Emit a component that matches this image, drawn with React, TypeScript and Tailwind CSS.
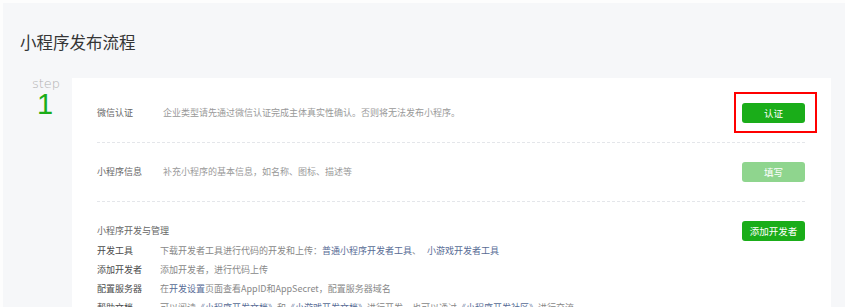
import React from 'react';

const font = { fontFamily: '"Noto Sans CJK SC", "Liberation Sans", sans-serif' };

function Btn({ children, light }: { children: React.ReactNode; light?: boolean }) {
    return (
        <div className={`w-[63px] h-[20px] rounded-[3px] flex items-center justify-center text-[9.5px] text-white ${light ? 'bg-[#8fd58e]' : 'bg-[#1aad19]'}`}>
            {children}
        </div>
    );
}

const subRows: { label: string; desc: React.ReactNode }[] = [
    {
        label: '开发工具',
        desc: (
            <>
                下载开发者工具进行代码的开发和上传：
                <span className="text-[#576b95]">普通小程序开发者工具</span>、
                <span className="text-[#576b95] ml-[6px]">小游戏开发者工具</span>
            </>
        ),
    },
    { label: '添加开发者', desc: '添加开发者，进行代码上传' },
    {
        label: '配置服务器',
        desc: (
            <>
                在<span className="text-[#576b95]">开发设置</span>页面查看AppID和AppSecret，配置服务器域名
            </>
        ),
    },
    {
        label: '帮助文档',
        desc: (
            <>
                可以阅读<span className="text-[#576b95]">《小程序开发文档》</span>和<span className="text-[#576b95]">《小游戏开发文档》</span>进行开发，也可以通过<span className="text-[#576b95]">《小程序开发社区》</span>进行交流
            </>
        ),
    },
];

export default function App() {
    return (
        <div className="w-[845px] h-[307px] overflow-hidden bg-[#fdfdfd] pt-[3px] pl-[3px]" style={font}>
            <div className="h-full bg-[#f6f7f9] pl-[17px] pr-[14px]">
                <h1 className="pt-[27px] text-[16.5px] leading-[24px] text-[#353535] font-normal">小程序发布流程</h1>

                <div className="flex mt-[24px]">
                    {/* step column */}
                    <div className="w-[52px] flex flex-col items-center">
                        <span className="text-[13px] leading-[12px] text-[#b2b2b2]" style={{ fontFamily: '"DejaVu Sans", sans-serif', fontWeight: 300 }}>step</span>
                        <span className="text-[29px] leading-[28px] text-[#1aad19] font-light -ml-[2px]" style={{ fontFamily: '"Liberation Sans", sans-serif' }}>1</span>
                    </div>

                    {/* card */}
                    <div className="flex-1 bg-white pt-[6px] pl-[25px] pr-[26px] h-[260px]">
                        <div className="flex items-center py-[19px]">
                            <span className="w-[66px] text-[9px] text-[#666]">微信认证</span>
                            <span className="flex-1 text-[9px] text-[#999]">企业类型请先通过微信认证完成主体真实性确认。否则将无法发布小程序。</span>
                            <div className="relative">
                                <Btn>认证</Btn>
                                <div className="absolute -left-[8px] -right-[12px] -top-[11px] -bottom-[10px] border-2 border-[#ff0000]" />
                            </div>
                        </div>
                        <div className="border-t border-dashed border-[#e4e6ea]" />

                        <div className="flex items-center py-[19px]">
                            <span className="w-[66px] text-[9px] text-[#666]">小程序信息</span>
                            <span className="flex-1 text-[9px] text-[#999]">补充小程序的基本信息，如名称、图标、描述等</span>
                            <Btn light>填写</Btn>
                        </div>
                        <div className="border-t border-dashed border-[#e4e6ea]" />

                        <div className="pt-[19px]">
                            <div className="flex items-center">
                                <span className="flex-1 text-[9px] text-[#666]">小程序开发与管理</span>
                                <Btn>添加开发者</Btn>
                            </div>
                            {subRows.map((r) => (
                                <div key={r.label} className="flex items-center h-[19px] text-[9px]">
                                    <span className="w-[63px] text-[#4a4a4a]">{r.label}</span>
                                    <span className="flex-1 text-[#888]">{r.desc}</span>
                                </div>
                            ))}
                        </div>
                    </div>
                </div>
            </div>
        </div>
    );
}
